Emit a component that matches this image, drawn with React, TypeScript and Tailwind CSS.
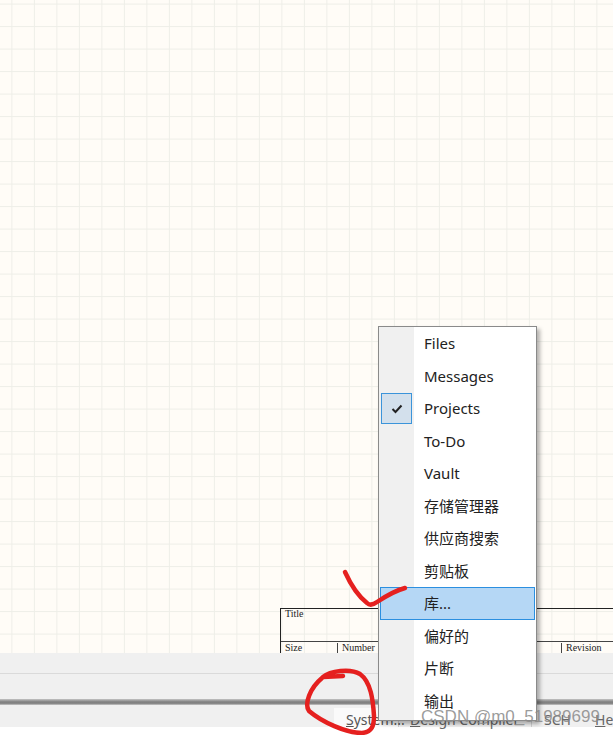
import React from 'react';

const menuItems = ['Files', 'Messages', 'Projects', 'To-Do', 'Vault', '存储管理器', '供应商搜索', '剪贴板', '库...', '偏好的', '片断', '输出'];

const App: React.FC = () => {
  return (
    <div className="relative w-[613px] h-[735px] overflow-hidden bg-white font-['Noto_Sans','Noto_Sans_CJK_SC',sans-serif]">
      {/* Schematic sheet */}
      <div className="relative h-[653px] bg-[#fffcf7] bg-[linear-gradient(to_right,#eeeee8_1.4px,transparent_1.4px),linear-gradient(to_bottom,#eeeee8_1.4px,transparent_1.4px)] bg-[size:22.5px_22.5px] bg-[position:11.4px_3.6px]">
        <div className="absolute left-[280px] top-[608px] w-[340px] h-[45px] border-t-[1.5px] border-l-[1.5px] border-[#222] font-['Liberation_Serif',serif] text-[10px] leading-none text-[#222]">
          <div className="h-[33px] border-b-[1.5px] border-[#444] pl-[4px]">Title</div>
          <div className="flex h-[11px] pt-[1px]">
            <div className="w-[56px] pl-[4px]">Size</div>
            <div className="w-[224px] border-l-[1.5px] border-[#444] pl-[4px]">Number</div>
            <div className="border-l-[1.5px] border-[#444] pl-[4px]">Revision</div>
          </div>
        </div>
      </div>

      {/* Bottom panels */}
      <div className="h-[74px] bg-[#f0f0f0] flex flex-col">
        <div className="h-[21px] border-b border-[#dadada]" />
        <div className="h-[25px]" />
        <div className="h-[6px] bg-[linear-gradient(to_bottom,#c4c4c4,#8a8a8a_40%,#7c7c7c_70%,#c8c8c8)]" />
        <div className="flex-1 flex items-end pl-[334px] text-[14px] leading-[24px] text-[#666] whitespace-nowrap">
          <div className="h-[19px] w-[65px] shrink-0 bg-[#fafafa] border-r border-[#d0d0d0] pl-[12px] text-[#555]">
            <span className="underline">S</span>ystem...
          </div>
          <div className="h-[19px] w-[133px] shrink-0 pl-[11px] border-r border-[#d0d0d0]">
            <span className="underline">D</span>esign Compiler
          </div>
          <div className="h-[19px] w-[63px] shrink-0 pl-[12px]">SCH</div>
          <div className="h-[19px] shrink-0"><span className="underline">H</span>elp</div>
        </div>
      </div>

      {/* Context menu */}
      <div className="absolute left-[378px] top-[326px] w-[159px] h-[395px] border border-[#8a8a8a] bg-white shadow-[3px_3px_4px_rgba(0,0,0,0.3)]">
        <div className="flex flex-col h-full bg-[linear-gradient(to_right,#f0f0f0_35px,white_35px)] overflow-hidden">
          {menuItems.map((item, i) => (
            <div
              key={item}
              className={`relative h-[32.5px] shrink-0 flex items-center text-[15px] text-[#222] ${i === 8 ? 'mx-[1px] pl-[43px] bg-[#b5d7f5] border border-[#2b8fe0]' : 'pl-[45px]'}`}
            >
              {i === 2 && (
                <div className="absolute left-[2px] top-[1px] w-[31px] h-[31px] bg-[#d3e0ec] border border-[#3b94da] flex items-center justify-center">
                  <svg width="12" height="10" viewBox="0 0 12 10" fill="none" stroke="#222" strokeWidth="2">
                    <path d="M1.5 5 L4.5 8 L10.5 1.5" />
                  </svg>
                </div>
              )}
              {item}
            </div>
          ))}
        </div>
      </div>

      {/* Red pen annotations */}
      <svg className="absolute inset-0 pointer-events-none" width="613" height="735" fill="none" stroke="#e5201f" strokeWidth="4.5" strokeLinecap="round" strokeLinejoin="round">
        <path d="M345 572 C350 583 358 596 367 603 C370 606 373 605 377 602 C386 596 394 591 405 588" />
        <path d="M343 676 L323 677 C330 671 350 668 360 674 C371 682 373 700 374 716 C374 726 372 732 362 733 C346 733 322 722 309 711 C304 704 310 688 322 678" />
      </svg>

      {/* Watermark */}
      <div className="absolute left-[421px] top-[707px] text-[17px] leading-[20px] text-[#8a8a8a]/85 whitespace-nowrap font-['Liberation_Sans',sans-serif]">
        CSDN @m0_51989699
      </div>
    </div>
  );
};

export default App;
